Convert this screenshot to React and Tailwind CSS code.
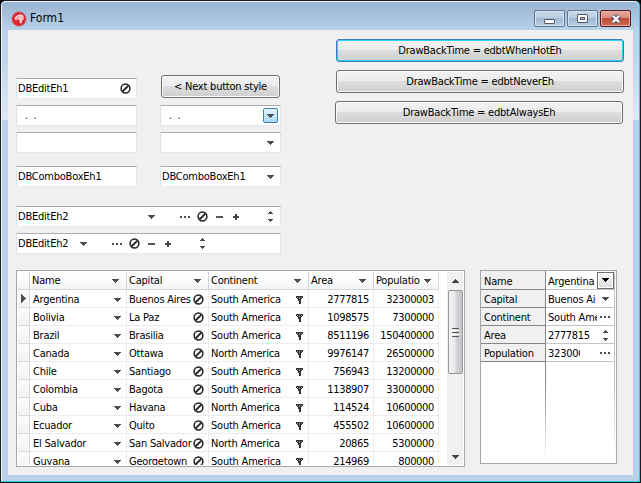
import React from "react";

const noBtn = "shrink-0 block";

function Down({ className = "", color = "#4d4d4d" }) {
  return (
    <svg className={`${noBtn} ${className}`} width="7" height="4" shapeRendering="crispEdges" fill={color}>
      <path d="M0 0h7v1H0zM1 1h5v1H1zM2 2h3v1H2zM3 3h1v1H3z" />
    </svg>
  );
}

function Forbid({ className = "" }) {
  return (
    <svg className={`${noBtn} ${className}`} width="11" height="11" viewBox="0 0 11 11" fill="none" stroke="#222">
      <circle cx="5.5" cy="5.5" r="4.4" strokeWidth="1.5" />
      <path d="M2.6 8.4L8.4 2.6" strokeWidth="2" />
    </svg>
  );
}

function Dots({ className = "" }) {
  return (
    <svg className={`${noBtn} ${className}`} width="10" height="2" shapeRendering="crispEdges" fill="#4d4d4d">
      <path d="M0 0h2v2H0zM4 0h2v2H4zM8 0h2v2H8z" />
    </svg>
  );
}

function Minus({ className = "" }) {
  return (
    <svg className={`${noBtn} ${className}`} width="7" height="6" shapeRendering="crispEdges" fill="#555">
      <path d="M0 2h7v2H0z" />
    </svg>
  );
}

function Plus({ className = "" }) {
  return (
    <svg className={`${noBtn} ${className}`} width="6" height="6" shapeRendering="crispEdges" fill="#444">
      <path d="M0 2h6v2H0zM2 0h2v6H2z" />
    </svg>
  );
}

function Spin({ className = "" }) {
  return (
    <svg className={`${noBtn} ${className}`} width="5" height="11" shapeRendering="crispEdges" fill="#4d4d4d">
      <path d="M2 0h1v1H2zM1 1h3v1H1zM0 2h5v1H0zM0 8h5v1H0zM1 9h3v1H1zM2 10h1v1H2z" />
    </svg>
  );
}

function Funnel({ className = "" }) {
  return (
    <svg className={`${noBtn} ${className}`} width="7" height="8" shapeRendering="crispEdges" fill="#333">
      <path d="M0 0h7v1H0zM0 1h1v1H0zM2 1h1v1H2zM4 1h1v1H4zM6 1h1v1H6zM1 2h2v1H1zM4 2h2v1H4zM2 3h3v1H2zM2 4h3v1H2zM3 5h2v3H3z" />
      <path d="M1 1h1v1H1zM3 1h1v2H3zM5 1h1v1H5z" fill="#888" />
    </svg>
  );
}

function AppIcon() {
  return (
    <svg className="block shrink-0" width="16" height="16" viewBox="0 0 16 16">
      <circle cx="8" cy="8" r="7.9" fill="#b3a2ad" />
      <circle cx="8" cy="8" r="6.9" fill="#dd2832" />
      <path d="M3.6 6.8L6.2 4.2 10 3.2 12.4 4.8 12.8 8 11.2 9.2 10.4 12.6 8.4 12 9 9.4 6.6 8.2 4.4 9.4z" fill="#fbdcdc" />
      <path d="M4.8 8l3.2-3M7 8.2l3.2-3.2M9.4 8.6l2.6-2.6" stroke="#e8656d" strokeWidth=".8" />
    </svg>
  );
}

function Caption({ children, className }) {
  return (
    <div className={`flex h-[17px] w-[31px] items-center justify-center rounded-[2px] border ${className}`}>
      {children}
    </div>
  );
}

const plainCaption =
  "border-[#66788d] bg-[linear-gradient(#c6d8ea_0%,#bacee3_48%,#a0b9d4_50%,#b5cce5_100%)] shadow-[inset_0_0_0_1px_#d3e1f0]";
const closeCaption =
  "border-[#571625] bg-[linear-gradient(#e3a89c_0%,#d98c7e_48%,#bd4a33_50%,#cf6c50_100%)] shadow-[inset_0_0_0_1px_#e6b1a5]";

function Button({ children, className = "", focused = false }) {
  return (
    <div
      className={`flex h-[23px] items-center justify-center whitespace-pre rounded-[3px] border bg-[linear-gradient(#f2f2f2_0%,#ebebeb_50%,#dddddd_50%,#cfcfcf_100%)] ${
        focused ? "border-[#3c7fb1] shadow-[inset_0_0_0_1px_#2bd0f5]" : "border-[#707070] shadow-[inset_0_0_0_1px_#fafafa]"
      } ${className}`}
    >
      {children}
    </div>
  );
}

function Field({ text = "", textClass = "", className = "w-[121px]", children }) {
  return (
    <div
      className={`flex h-[21px] items-center rounded-[1px] border border-x-[#e2e3ea] border-t-[#abadb3] border-b-[#e3e9ef] bg-white pl-px ${className}`}
    >
      <span className={`whitespace-pre ${textClass}`}>{text}</span>
      {children}
    </div>
  );
}

const rows = [
  ["Argentina", "Buenos Aires", "South America", "2777815", "32300003"],
  ["Bolivia", "La Paz", "South America", "1098575", "7300000"],
  ["Brazil", "Brasilia", "South America", "8511196", "150400000"],
  ["Canada", "Ottawa", "North America", "9976147", "26500000"],
  ["Chile", "Santiago", "South America", "756943", "13200000"],
  ["Colombia", "Bagota", "South America", "1138907", "33000000"],
  ["Cuba", "Havana", "North America", "114524", "10600000"],
  ["Ecuador", "Quito", "South America", "455502", "10600000"],
  ["El Salvador", "San Salvador", "North America", "20865", "5300000"],
  ["Guyana", "Georgetown", "South America", "214969", "800000"],
];

const headers = [
  ["Name", "w-[97px] pr-[7px]"],
  ["Capital", "w-[82px] pr-[7px]"],
  ["Continent", "w-[100px] pr-[7px]"],
  ["Area", "w-[65px] pr-[7px]"],
  ["Populatio", "w-[65px] pr-[7px]"],
];

const cell = "flex h-[18px] shrink-0 items-center border-r border-b border-[#ececec] overflow-hidden pt-[2px]";

function Grid() {
  return (
    <div className="flex h-[197px] w-[449px] border border-[#a5a7ad] bg-white p-px">
      <div className="h-[193px] w-[421px] shrink-0 overflow-hidden">
        <div className="flex h-[18px] bg-[linear-gradient(#ffffff_0%,#fafbfc_50%,#f1f3f6_100%)]">
          <div className="w-3 border-r border-b border-[#d2d4d8]" />
          {headers.map(([t, c]) => (
            <div key={t} className={`flex shrink-0 items-center justify-between border-r border-b border-[#d2d4d8] pl-[2px] ${c}`}>
              <span className="whitespace-pre">{t}</span>
              <Down />
            </div>
          ))}
        </div>
        {rows.map((r, i) => (
          <div key={r[0]} className="flex">
            <div className="flex h-[18px] w-3 shrink-0 items-center border-r border-b border-[#d5d7da] bg-[linear-gradient(#fcfcfd,#f1f2f4)] pl-[3px]">
              {i === 0 && (
                <svg width="5" height="9" shapeRendering="crispEdges" fill="#4d4d4d" className="block">
                  <path d="M0 0h1v9H0zM1 1h1v7H1zM2 2h1v5H2zM3 3h1v3H3zM4 4h1v1H4z" />
                </svg>
              )}
            </div>
            <div className={`${cell} w-[97px] justify-between pr-[5px] pl-[3px]`}>
              <span>{r[0]}</span>
              <Down />
            </div>
            <div className={`${cell} w-[82px] pr-[3px] pl-[2px]`}>
              <span className="w-[63px] shrink-0 overflow-hidden whitespace-pre">{r[1]}</span>
              <Forbid className="mb-px ml-px" />
            </div>
            <div className={`${cell} w-[100px] justify-between pr-[5px] pl-[2px]`}>
              <span className="whitespace-pre">{r[2]}</span>
              <Funnel />
            </div>
            <div className={`${cell} w-[65px] justify-end pr-[4px] tracking-[-0.33px]`}>{r[3]}</div>
            <div className={`${cell} w-[65px] justify-end pr-[4px] tracking-[-0.33px]`}>{r[4]}</div>
          </div>
        ))}
      </div>
      <div className="ml-[8px] flex h-[193px] w-[16px] flex-col items-center bg-[#f0f0f0]">
        <svg className="mt-[7px] block shrink-0" width="7" height="4" shapeRendering="crispEdges" fill="#444">
          <path d="M3 0h1v1H3zM2 1h3v1H2zM1 2h5v1H1zM0 3h7v1H0z" />
        </svg>
        <div className="mt-[7px] flex h-[84px] w-[15px] flex-col items-center justify-center gap-px rounded-[2px] border border-[#979797] bg-[linear-gradient(90deg,#f5f5f5_0%,#e9e9eb_45%,#d4d5d8_55%,#c3c4c8_100%)]">
          <div className="h-px w-[7px] bg-[#555]" />
          <div className="h-px w-[7px] bg-white" />
          <div className="h-px w-[7px] bg-[#555]" />
          <div className="h-px w-[7px] bg-white" />
          <div className="h-px w-[7px] bg-[#555]" />
        </div>
        <div className="grow" />
        <Down className="mb-[6px]" color="#444" />
      </div>
    </div>
  );
}

const details = [
  ["Name", "Argentina", "w-[49px]"],
  ["Capital", "Buenos Aires", "w-[48px]"],
  ["Continent", "South America", "w-[49px]"],
  ["Area", "2777815", "w-[50px] tracking-[-0.35px]"],
  ["Population", "32300003", "w-[32px]"],
];

function Details() {
  const icons = [
    <div key="n" className="-mt-px flex h-[17px] w-[17px] shrink-0 items-center justify-center border border-[#6d6d6d] bg-[linear-gradient(#f8f8f8,#dcdcdc)] shadow-[inset_0_0_0_1px_#fff]">
      <Down color="#000" />
    </div>,
    <Down key="c" className="mr-[5px]" />,
    <Dots key="o" className="mr-[4px]" />,
    <Spin key="a" className="mr-[6px]" />,
    <Dots key="p" className="mr-[4px]" />,
  ];
  return (
    <div className="flex h-[194px] w-[137px] flex-col border border-[#a5a7ad] bg-white">
      {details.map(([k, v, w], i) => (
        <div key={k} className={`flex shrink-0 ${i === 0 ? "h-[19px]" : "h-[18px]"}`}>
          <div className="flex w-[65px] shrink-0 items-center border-r border-b border-[#868686] bg-[#f0f0f0] pt-[2px] pl-[3px]">{k}</div>
          <div className="flex w-[69px] shrink-0 items-center justify-between border-r border-b border-[#c4c4c4] pt-px pl-[2px]">
            <span className={`overflow-hidden whitespace-pre pt-px ${w}`}>{v}</span>
            {icons[i]}
          </div>
        </div>
      ))}
      <div className="flex h-[99px]">
        <div className="ml-[64px] w-px bg-[linear-gradient(#868686_20%,#ffffff)]" />
        <div className="ml-[68px] w-px bg-[linear-gradient(#c4c4c4_20%,#ffffff)]" />
      </div>
    </div>
  );
}

export default function App() {
  return (
    <div className="h-[483px] w-[641px] overflow-hidden bg-black font-['DejaVu_Sans_Condensed','DejaVu_Sans',sans-serif] text-[11px] leading-[15px] tracking-[-0.22px] text-black [font-stretch:condensed]">
      <div className="h-[483px] w-[641px] rounded-t-[6px] border border-[#1b1b1f] bg-[#2ccbe3] pr-px pb-px">
        <div className="h-[480px] w-[638px] rounded-t-[5px] border-t border-l border-[#f1f6fb] bg-[#b9d1ea] bg-[linear-gradient(#99b4d1_0px,#b9d1ea_28px,#bfd5ec_55px,#dde9f6_118px,#b9d1ea_118px)]">
          <div className="flex h-[28px] items-start pt-[8px] pl-[9px]">
            <div className="pt-px">
              <AppIcon />
            </div>
            <span className="ml-[3px] grow pt-px text-[12px] tracking-[0px]">Form1</span>
            <div className="mr-[8px] flex gap-[2px]">
              <Caption className={plainCaption}>
                <div className="mt-[5px] h-[5px] w-[11px] rounded-[1px] border border-[#535666] bg-white" />
              </Caption>
              <Caption className={plainCaption}>
                <div className="flex h-[9px] w-[11px] items-center justify-center rounded-[1px] border border-[#535666] bg-white">
                  <div className="h-[3px] w-[5px] border border-[#535666] bg-[#a0b9d4]" />
                </div>
              </Caption>
              <Caption className={closeCaption}>
                <svg width="12" height="10" viewBox="0 0 12 10" className="block">
                  <path d="M2.5 1.5L9.5 8.5M9.5 1.5L2.5 8.5" stroke="#535666" strokeWidth="4.2" />
                  <path d="M2.8 1.8L9.2 8.2M9.2 1.8L2.8 8.2" stroke="#fff" strokeWidth="2.3" />
                </svg>
              </Caption>
            </div>
          </div>
          <div className="ml-[6px] h-[445px] w-[625px] bg-[#f0f0f0] pl-[8px]">
            <div className="flex h-[240px] items-start">
              <div className="w-[265px] shrink-0 pt-[45px]">
                <div className="flex items-end gap-[24px]">
                  <Field text="DBEditEh1" className="mt-[3px] w-[121px] justify-between pr-[5px]">
                    <Forbid />
                  </Field>
                  <Button className="mb-px w-[119px]">{"< Next button style"}</Button>
                </div>
                <div className="mt-[6px] flex gap-[23px]">
                  <Field text="  .  ." textClass="pl-px text-[#101050]" />
                  <Field text="  .  ." textClass="pl-px text-[#101050]" className="w-[121px] justify-between pr-[2px]">
                    <div className="flex h-[15px] w-[15px] items-center justify-center rounded-[2px] border border-[#3c7fb1] bg-[linear-gradient(#e5f5fd,#a9dbf6)]">
                      <Down />
                    </div>
                  </Field>
                </div>
                <div className="mt-[6px] flex gap-[23px]">
                  <Field />
                  <Field className="w-[121px] justify-between pr-[6px]">
                    <Down />
                  </Field>
                </div>
                <div className="mt-[13px] flex gap-[23px]">
                  <Field text="DBComboBoxEh1" />
                  <Field text="DBComboBoxEh1" className="w-[121px] justify-between pr-[6px]">
                    <Down />
                  </Field>
                </div>
                <Field text="DBEditEh2" textClass="w-[130px]" className="mt-[19px] w-[265px]">
                  <Down />
                  <Dots className="ml-[25px]" />
                  <Forbid className="ml-[7px]" />
                  <Minus className="ml-[8px]" />
                  <Plus className="ml-[10px]" />
                  <Spin className="ml-[29px]" />
                </Field>
                <Field text="DBEditEh2" textClass="w-[62px]" className="mt-[6px] w-[265px]">
                  <Down />
                  <Dots className="ml-[25px]" />
                  <Forbid className="ml-[7px]" />
                  <Minus className="ml-[8px]" />
                  <Plus className="ml-[10px]" />
                  <Spin className="ml-[29px]" />
                </Field>
              </div>
              <div className="ml-[54px] flex flex-col gap-[8px] pt-[9px]">
                <Button focused className="ml-px w-[288px]">DrawBackTime = edbtWhenHotEh</Button>
                <Button className="ml-px w-[288px]">DrawBackTime = edbtNeverEh</Button>
                <Button className="w-[288px]">DrawBackTime = edbtAlwaysEh</Button>
              </div>
            </div>
            <div className="flex items-start gap-[15px]">
              <Grid />
              <Details />
            </div>
          </div>
        </div>
      </div>
    </div>
  );
}
